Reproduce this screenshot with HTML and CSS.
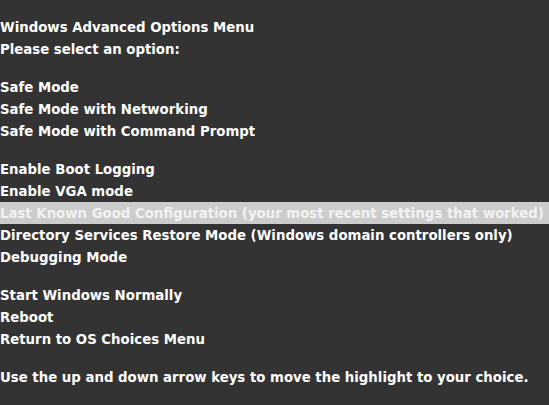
FILE: index.html
```html
<!DOCTYPE html>
<html lang="en">
<head>
    <meta charset="UTF-8">
    <meta name="viewport" content="width=device-width, initial-scale=1.0">
    <title>Windows Advanced Options Menu</title>
    <link rel="stylesheet" href="styles.css">
</head>
<body>
    <div class="screen">
        <div class="group">
            <div class="line">Windows Advanced Options Menu</div>
            <div class="line">Please select an option:</div>
        </div>
        <div class="group">
            <div class="line">Safe Mode</div>
            <div class="line">Safe Mode with Networking</div>
            <div class="line">Safe Mode with Command Prompt</div>
        </div>
        <div class="group">
            <div class="line">Enable Boot Logging</div>
            <div class="line">Enable VGA mode</div>
            <div class="line selected">Last Known Good Configuration (your most recent settings that worked)</div>
            <div class="line">Directory Services Restore Mode (Windows domain controllers only)</div>
            <div class="line">Debugging Mode</div>
        </div>
        <div class="group">
            <div class="line">Start Windows Normally</div>
            <div class="line">Reboot</div>
            <div class="line">Return to OS Choices Menu</div>
        </div>
        <div class="group">
            <div class="line">Use the up and down arrow keys to move the highlight to your choice.</div>
        </div>
    </div>
</body>
</html>
```

FILE: styles.css
```css
body {
    margin: 0;
    background-color: #333333;
    color: #ffffff;
    font-family: 'DejaVu Sans', 'Open Sans', sans-serif;
    font-weight: bold;
    font-size: 13.3px;
}

.screen {
    width: 549px;
    height: 405px;
    padding-top: 16px;
    box-sizing: border-box;
}

.group + .group {
    margin-top: 16px;
}

.line {
    height: 22px;
    line-height: 23px;
    white-space: nowrap;
}

.selected {
    background-color: #cccccc;
    color: #f2f2f2;
}
```
